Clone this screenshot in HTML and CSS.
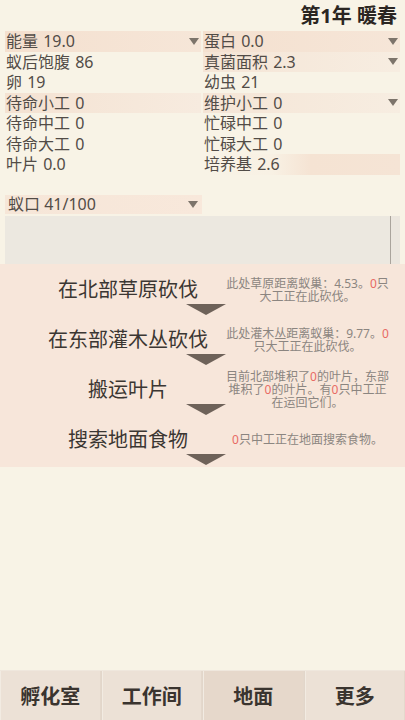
FILE: index.html
```html
<!DOCTYPE html>
<html lang="zh">
<head>
<meta charset="utf-8">
<link rel="stylesheet" href="styles.css">
</head>
<body>
<div class="page">
  <header class="top"><h1 class="season">第1年 暖春</h1></header>

  <section class="stats">
    <div class="cell hl">能量 19.0<svg class="dd" viewBox="0 0 10 7"><polygon points="0,0 10,0 5,7"/></svg></div>
    <div class="cell hl">蛋白 0.0<svg class="dd" viewBox="0 0 10 7"><polygon points="0,0 10,0 5,7"/></svg></div>
    <div class="cell">蚁后饱腹 86</div>
    <div class="cell hl-soft">真菌面积 2.3<svg class="dd" viewBox="0 0 10 7"><polygon points="0,0 10,0 5,7"/></svg></div>
    <div class="cell">卵 19</div>
    <div class="cell">幼虫 21</div>
    <div class="cell hl-fade">待命小工 0</div>
    <div class="cell hl-soft">维护小工 0<svg class="dd" viewBox="0 0 10 7"><polygon points="0,0 10,0 5,7"/></svg></div>
    <div class="cell">待命中工 0</div>
    <div class="cell">忙碌中工 0</div>
    <div class="cell">待命大工 0</div>
    <div class="cell">忙碌大工 0</div>
    <div class="cell">叶片 0.0</div>
    <div class="cell hl-right">培养基 2.6</div>
  </section>

  <div class="select">蚁口 41/100<svg class="dd" viewBox="0 0 10 7"><polygon points="0,0 10,0 5,7"/></svg></div>

  <div class="log"><div class="log-body"></div><div class="log-bar"></div></div>

  <section class="tasks">
    <div class="task">
      <div class="task-left">
        <div class="task-title">在北部草原砍伐</div>
        <svg class="tri" viewBox="0 0 40 11"><polygon points="0,0 40,0 20,11"/></svg>
      </div>
      <div class="task-desc"><div class="ln">此处草原距离蚁巢：4.53。<span class="red">0</span>只</div><div class="ln">大工正在此砍伐。</div></div>
    </div>
    <div class="task">
      <div class="task-left">
        <div class="task-title">在东部灌木丛砍伐</div>
        <svg class="tri" viewBox="0 0 40 11"><polygon points="0,0 40,0 20,11"/></svg>
      </div>
      <div class="task-desc"><div class="ln">此处灌木丛距离蚁巢：9.77。<span class="red">0</span></div><div class="ln">只大工正在此砍伐。</div></div>
    </div>
    <div class="task">
      <div class="task-left">
        <div class="task-title">搬运叶片</div>
        <svg class="tri" viewBox="0 0 40 11"><polygon points="0,0 40,0 20,11"/></svg>
      </div>
      <div class="task-desc"><div class="ln">目前北部堆积了<span class="red">0</span>的叶片，东部</div><div class="ln">堆积了<span class="red">0</span>的叶片。有<span class="red">0</span>只中工正</div><div class="ln">在运回它们。</div></div>
    </div>
    <div class="task">
      <div class="task-left">
        <div class="task-title">搜索地面食物</div>
        <svg class="tri" viewBox="0 0 40 11"><polygon points="0,0 40,0 20,11"/></svg>
      </div>
      <div class="task-desc"><div class="ln"><span class="red">0</span>只中工正在地面搜索食物。</div></div>
    </div>
  </section>

  <nav class="nav">
    <div class="tab">孵化室</div>
    <div class="tab">工作间</div>
    <div class="tab active">地面</div>
    <div class="tab">更多</div>
  </nav>
</div>
</body>
</html>
```

FILE: styles.css
```css
* { box-sizing: border-box; }
html, body {
  margin: 0;
  padding: 0;
  background: #f8f3e6;
}
body {
  font-family: "Noto Sans", "Noto Sans CJK SC", sans-serif;
  color: #524c47;
}
.page {
  height: 720px;
  display: flex;
  flex-direction: column;
}
.top {
  height: 31px;
  display: flex;
  justify-content: flex-end;
  align-items: center;
  padding-right: 8px;
}
.season {
  margin: 0;
  font-size: 20px;
  font-weight: bold;
  color: #2b2622;
  line-height: 31px;
}
.stats {
  display: grid;
  grid-template-columns: 196px 197px;
  column-gap: 2px;
  margin-left: 5px;
}
.cell {
  height: 20.5px;
  line-height: 20.5px;
  font-size: 16px;
  display: flex;
  justify-content: space-between;
  align-items: center;
  padding-left: 1px;
  padding-right: 2px;
  white-space: nowrap;
  word-spacing: 1px;
}
.hl { background: linear-gradient(to right, #f4e0cf, #f6e6d8); }
.hl-soft { background: linear-gradient(to right, #f5e5d6, #f7ede1); }
.hl-fade { background: linear-gradient(to right, #f4e2d2, #f7ebdf); }
.hl-right { background: linear-gradient(to right, #f8f3e6 0%, #f8f1e4 35%, #f5e3d3 55%, #f5e4d5 100%); }
.dd {
  width: 10px;
  height: 7px;
  fill: #7d746b;
  flex: none;
}
.select {
  margin: 20px 0 0 5px;
  width: 197px;
  height: 19px;
  line-height: 19px;
  font-size: 16px;
  padding: 0 4px 0 3px;
  display: flex;
  justify-content: space-between;
  align-items: center;
  background: linear-gradient(to right, #f6e6d8, #f8e8db);
}
.log {
  margin: 2px 5px 0 5px;
  height: 48px;
  display: flex;
  background: #ece8e0;
}
.log-body { flex: 1; }
.log-bar {
  width: 10px;
  border-left: 1px solid #aaa49c;
  background: #ebe6de;
}
.tasks {
  background: #f7e6da;
  padding-top: 1px;
  padding-bottom: 2px;
}
.task {
  height: 50px;
  display: grid;
  grid-template-columns: 222px 1fr;
}
.task-left {
  display: flex;
  flex-direction: column;
}
.task-title {
  height: 39px;
  line-height: 50px;
  padding-left: 34px;
  text-align: center;
  font-size: 20px;
  color: #3b3632;
  white-space: nowrap;
}
.tri {
  width: 40px;
  height: 11px;
  margin-left: 186px;
  fill: #6e6259;
  flex: none;
}
.task-desc {
  align-self: center;
  padding-right: 12px;
  text-align: center;
  font-size: 12px;
  line-height: 13px;
  color: #8b8580;
}
.ln { white-space: nowrap; height: 13px; }
.red {
  color: #e86a64;
  display: inline-block;
  line-height: 13px;
  height: 13px;
}
.nav {
  margin-top: auto;
  height: 50px;
  display: flex;
  gap: 1px;
  background: #e2d6ca;
  border-top: 1px solid #efe7dd;
}
.tab {
  flex: 1;
  display: flex;
  justify-content: center;
  align-items: center;
  font-size: 20px;
  font-weight: bold;
  color: #3a342f;
  background: #ece1d6;
  border-left: 1px solid #f2ebe2;
  border-right: 1px solid #e4d8cc;
}
.tab.active { background: #e6d8cb; }
```
